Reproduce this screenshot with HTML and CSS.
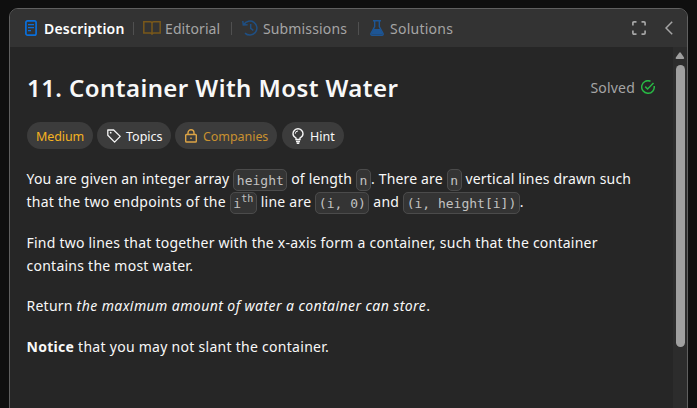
FILE: index.html
```html
<!DOCTYPE html>
<html lang="en">
<head>
<meta charset="utf-8">
<title>Container With Most Water</title>
<link rel="stylesheet" href="styles.css">
</head>
<body>
<main class="panel">
  <header class="tabbar">
    <nav class="tabs">
      <a class="tab tab-description">
        <svg width="12" height="16" viewBox="0 0 12 16" fill="none" stroke="#0a6fdb" stroke-width="1.7"><rect x=".9" y=".9" width="10.2" height="14.2" rx="1.7"/><path d="M3 4.7h6M3 7.7h6M3 10.6h3" stroke-width="1.3"/></svg>
        <span>Description</span>
      </a>
      <a class="tab tab-editorial">
        <svg width="18" height="14" viewBox="0 0 18 14" fill="none" stroke="#79581a" stroke-width="1.5"><path d="M9 12.2V2.3C9 1.4 8.3.8 7.4.8H.8v11.3h6.4c.8 0 1.3.3 1.8 1 .5-.7 1-1 1.800-1h6.400V.8h-6.600C9.700.8 9 1.400 9 2.300"/></svg>
        <span>Editorial</span>
      </a>
      <a class="tab tab-submissions">
        <svg width="16" height="16" viewBox="0 0 16 16" fill="none" stroke="#1f4f83" stroke-width="1.5"><path d="M1.900 4.500A7 7 0 1 1 3 13.100M.8 1l.5 4 4.300-.3M8.700 4v4.400l2.600 2"/></svg>
        <span>Submissions</span>
      </a>
      <a class="tab tab-solutions">
        <svg width="14" height="16" viewBox="0 0 14 16" fill="none" stroke="#1d5594" stroke-width="1.400"><path d="M3 .8h8M4.700 1v5.500L1 13.300c-.5 1 0 1.900 1 1.900h10c1 0 1.500-.9 1-1.900L9.300 6.500V1"/><path d="M3.500 9h7l2.500 5.500H1z" fill="#1d5594" stroke="none"/></svg>
        <span>Solutions</span>
      </a>
    </nav>
    <div class="tools">
      <svg width="14" height="14" viewBox="0 0 14 14" fill="none" stroke="#a6a6a6" stroke-width="1.700"><path d="M.9 4.500V2Q.9.900 2 .900h2.500M9.500.900H12q1.100 0 1.100 1.100v2.500M13.100 9.500V12q0 1.100-1.100 1.100H9.500M4.500 13.100H2Q.900 13.100.900 12V9.500"/></svg>
      <svg width="8" height="14" viewBox="0 0 8 14" fill="none" stroke="#a6a6a6" stroke-width="1.500"><path d="M7.200.8L1 7l6.200 6.200"/></svg>
    </div>
  </header>
  <div class="body">
    <article class="content">
      <div class="heading">
        <h1>11. Container With Most Water</h1>
        <div class="solved"><span>Solved</span>
          <svg width="14" height="14" viewBox="0 0 14 14" fill="none" stroke="#28b744" stroke-width="1.500"><path d="M9.500 1.200A6.300 6.300 0 1 0 13.200 6M4.200 6.600l2.400 2.400L12.500 3"/></svg>
        </div>
      </div>
      <div class="chips">
        <span class="chip medium"><span>Medium</span></span>
        <span class="chip topics">
          <svg width="14" height="14" viewBox="0 0 14 14" fill="none" stroke="#f5f5f5" stroke-width="1.300"><path d="M.8 1v5.200l6.800 6.900 5.600-5.700L6.400.8z" stroke-linejoin="round"/><circle cx="3.700" cy="3.700" r=".9" fill="#f5f5f5" stroke="none"/></svg>
          <span>Topics</span></span>
        <span class="chip companies">
          <svg width="12" height="14" viewBox="0 0 12 14" fill="none" stroke="#dda445" stroke-width="1.400"><rect x=".7" y="5.500" width="10.600" height="7.500" rx=".8"/><path d="M3 5.500V3.800a3 3 0 0 1 6 0v1.700M6 8.500v1.500"/></svg>
          <span>Companies</span></span>
        <span class="chip hint">
          <svg width="12" height="16" viewBox="0 0 12 16" fill="none" stroke="#f5f5f5" stroke-width="1.400"><path d="M4 11.500V10C2.300 9 1 7.800 1 5.700a5 5 0 0 1 10 0C11 7.800 9.700 9 8 10v1.500zM4 13.500h4M4.700 15.200h2.600"/><path d="M3.300 5.700A2.700 2.700 0 0 1 6 3" stroke-width="1"/></svg>
          <span>Hint</span></span>
      </div>
      <p><span class="line l1">You are given an integer array <code>height</code> of length <code>n</code>. There are <code>n</code> vertical lines drawn such</span>
      <span class="line l2">that the two endpoints of the <code>i<sup>th</sup></code> line are <code>(i, 0)</code> and <code>(i, height[i])</code>.</span></p>
      <p><span class="line l3">Find two lines that together with the x-axis form a container, such that the container</span>
      <span class="line l4">contains the most water.</span></p>
      <p><span class="line l5">Return <em>the maximum amount of water a container can store</em>.</span></p>
      <p><span class="line l6"><strong>Notice</strong> that you may not slant the container.</span></p>
    </article>
    <div class="scrollbar">
      <svg width="10" height="8" viewBox="0 0 10 8"><path d="M4.200.8q.8-1 1.600 0L9 5.500q.6 1.500-.8 1.500H1.500Q.2 7 .8 5.500z" fill="#9f9f9f"/></svg>
      <div class="thumb"></div>
    </div>
  </div>
</main>
</body>
</html>
```

FILE: styles.css
```css
* { box-sizing: border-box; }
body {
  margin: 0;
  height: 408px;
  padding: 8px 9px 0;
  overflow: hidden;
  background: #0f0f0f;
  color: #f8f8f8;
  font-family: "Noto Sans", "Open Sans", sans-serif;
  font-size: 14px;
}
svg { display: block; flex: none; }
.panel {
  height: 410px;
  border: 1px solid #606060;
  border-radius: 9px;
  overflow: hidden;
  background: #262626;
}
.tabbar {
  display: flex;
  justify-content: space-between;
  height: 38px;
  background: #333;
}
.tabs { display: flex; align-items: center; height: 38px; }
.tab {
  position: relative;
  display: flex;
  align-items: center;
  height: 38px;
  color: #a5a5a5;
  white-space: nowrap;
}
.tab + .tab::before {
  content: "";
  position: absolute;
  left: 0;
  top: 13px;
  width: 1px;
  height: 13px;
  background: #505050;
}
.tab-description { width: 123px; padding-left: 15px; gap: 7px; color: #fff; font-weight: 600; letter-spacing: .2px; }
.tab-editorial { width: 98px; padding-left: 10px; gap: 4px; letter-spacing: .1px; }
.tab-submissions { width: 127px; padding-left: 11px; gap: 5px; letter-spacing: .14px; }
.tab-solutions { padding-left: 12px; gap: 6px; letter-spacing: .25px; }
.tools { display: flex; align-items: center; gap: 19px; padding-right: 14px; }
.body { display: flex; height: 371px; }
.content { flex: 1; padding: 25px 18px 0 17px; }
.heading { display: flex; justify-content: space-between; align-items: center; height: 32px; }
h1 { margin: 0; font-size: 24px; line-height: 32px; font-weight: 600; letter-spacing: .43px; white-space: nowrap; }
.solved { display: flex; align-items: center; gap: 6px; height: 30px; margin-bottom: 2px; color: #a5a5a5; letter-spacing: .2px; }
.chips { display: flex; gap: 4px; margin: 18px 0; }
.chip {
  display: flex;
  align-items: center;
  height: 27px;
  padding-left: 9px;
  border-radius: 14px;
  background: #3c3c3c;
  font-size: 12.5px;
  white-space: nowrap;
}
.chip > span { padding-top: 1px; }
.medium { width: 66px; color: #f5b321; letter-spacing: -.1px; }
.topics { width: 74px; gap: 5px; padding-left: 10px; }
.companies { width: 102px; gap: 6px; padding-left: 10px; color: #c9912f; letter-spacing: -.06px; }
.hint { width: 62px; gap: 6px; padding-left: 10px; margin-left: 1px; }
p { margin: 0 0 17.6px -.5px; line-height: 23px; }
.line { display: block; height: 23px; white-space: nowrap; }
.l1 { letter-spacing: .17px; }
.l2 { letter-spacing: .25px; }
.l3 { letter-spacing: .23px; }
.l4 { letter-spacing: .25px; }
.l5 { letter-spacing: .24px; }
.l5 em { letter-spacing: .42px; }
.l6 { letter-spacing: .28px; }
code {
  padding: 2.500px 2.600px;
  border: 1px solid #4b4b4b;
  border-radius: 5px;
  background: #343434;
  color: #c2c2c2;
  font: 13px/1 "DejaVu Sans Mono", monospace;
  letter-spacing: 0;
}
sup { font-size: 10px; line-height: 0; }
.scrollbar {
  display: flex;
  flex-direction: column;
  align-items: center;
  width: 14px;
  padding-top: 5px;
  background: #2c2c2c;
}
.thumb { width: 9px; height: 282px; margin-top: 5px; border-radius: 5px; background: #9f9f9f; }
```
